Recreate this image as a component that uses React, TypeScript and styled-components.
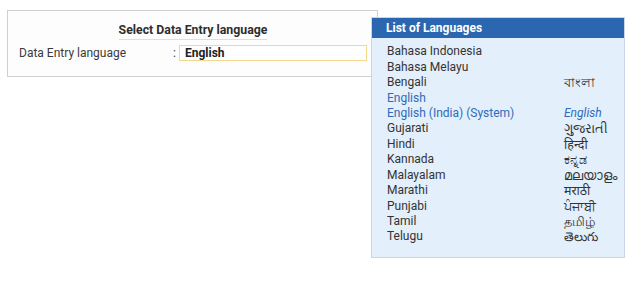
import styled, { createGlobalStyle } from 'styled-components';

const GlobalStyle = createGlobalStyle`
  html, body {
    margin: 0;
    padding: 0;
    background: #ffffff;
    font-family: Roboto, "Noto Sans", sans-serif;
    color: #333;
  }
`;

const Page = styled.div`
  position: relative;
  width: 632px;
  height: 286px;
  padding: 10px 0 0 7px;
  box-sizing: border-box;
`;

const Panel = styled.div`
  width: 371px;
  height: 67px;
  box-sizing: border-box;
  border: 1px solid #cfcfcf;
  background: #fdfdfd;
  padding: 11px 10px 0 11px;
`;

const Title = styled.div`
  display: flex;
  justify-content: center;
  margin-bottom: 5px;
`;

const TitleText = styled.span`
  font-size: 12.3px;
  font-weight: 700;
  line-height: 16px;
  color: #2d2d2d;
  border-bottom: 1px solid #dedede;
  padding-bottom: 1px;
`;

const FieldRow = styled.div`
  display: flex;
  align-items: center;
`;

const Label = styled.span`
  width: 154px;
  font-size: 12px;
  color: #3a3a3a;
`;

const Colon = styled.span`
  width: 6px;
  font-size: 12px;
  color: #3a3a3a;
`;

const Input = styled.div`
  width: 188px;
  height: 16px;
  box-sizing: border-box;
  border: 1px solid #f3d98e;
  background: #fff;
  padding-left: 5px;
  font-size: 12px;
  line-height: 14px;
  font-weight: 700;
  color: #222;
`;

const Popup = styled.div`
  position: absolute;
  left: 371px;
  top: 17px;
  width: 254px;
  height: 241px;
  box-sizing: border-box;
  border: 1px solid #c9d6e3;
  background: #e3effb;
`;

const PopupHeader = styled.div`
  height: 20px;
  background: #2b66b0;
  color: #fff;
  font-size: 12px;
  font-weight: 700;
  line-height: 20px;
  padding-left: 14px;
`;

const List = styled.div`
  padding: 6px 0 0 15px;
`;

const Item = styled.div<{ $active?: boolean }>`
  display: flex;
  align-items: center;
  height: 15.45px;
  line-height: 15px;
  font-size: 12px;
  color: ${(p) => (p.$active ? '#2d6bbd' : '#333')};
`;

const Name = styled.span`
  width: 177px;
`;

const Native = styled.span<{ $italic?: boolean }>`
  font-family: ${(p) => (p.$italic ? 'Roboto, sans-serif' : '"Noto Sans", sans-serif')};
  font-size: ${(p) => (p.$italic ? '12px' : '12.5px')};
  line-height: 15px;
  font-style: ${(p) => (p.$italic ? 'italic' : 'normal')};
`;

const languages: { name: string; native?: string; active?: boolean; italic?: boolean }[] = [
  { name: 'Bahasa Indonesia' },
  { name: 'Bahasa Melayu' },
  { name: 'Bengali', native: 'বাংলা' },
  { name: 'English', active: true },
  { name: 'English (India) (System)', native: 'English', active: true, italic: true },
  { name: 'Gujarati', native: 'ગુજરાતી' },
  { name: 'Hindi', native: 'हिन्दी' },
  { name: 'Kannada', native: 'ಕನ್ನಡ' },
  { name: 'Malayalam', native: 'മലയാളം' },
  { name: 'Marathi', native: 'मराठी' },
  { name: 'Punjabi', native: 'ਪੰਜਾਬੀ' },
  { name: 'Tamil', native: 'தமிழ்' },
  { name: 'Telugu', native: 'తెలుగు' },
];

export default function App() {
  return (
    <>
      <GlobalStyle />
      <Page>
        <Panel>
          <Title>
            <TitleText>Select Data Entry language</TitleText>
          </Title>
          <FieldRow>
            <Label>Data Entry language</Label>
            <Colon>:</Colon>
            <Input>English</Input>
          </FieldRow>
        </Panel>
        <Popup>
          <PopupHeader>List of Languages</PopupHeader>
          <List>
            {languages.map((l) => (
              <Item key={l.name} $active={l.active}>
                <Name>{l.name}</Name>
                {l.native && <Native $italic={l.italic}>{l.native}</Native>}
              </Item>
            ))}
          </List>
        </Popup>
      </Page>
    </>
  );
}
